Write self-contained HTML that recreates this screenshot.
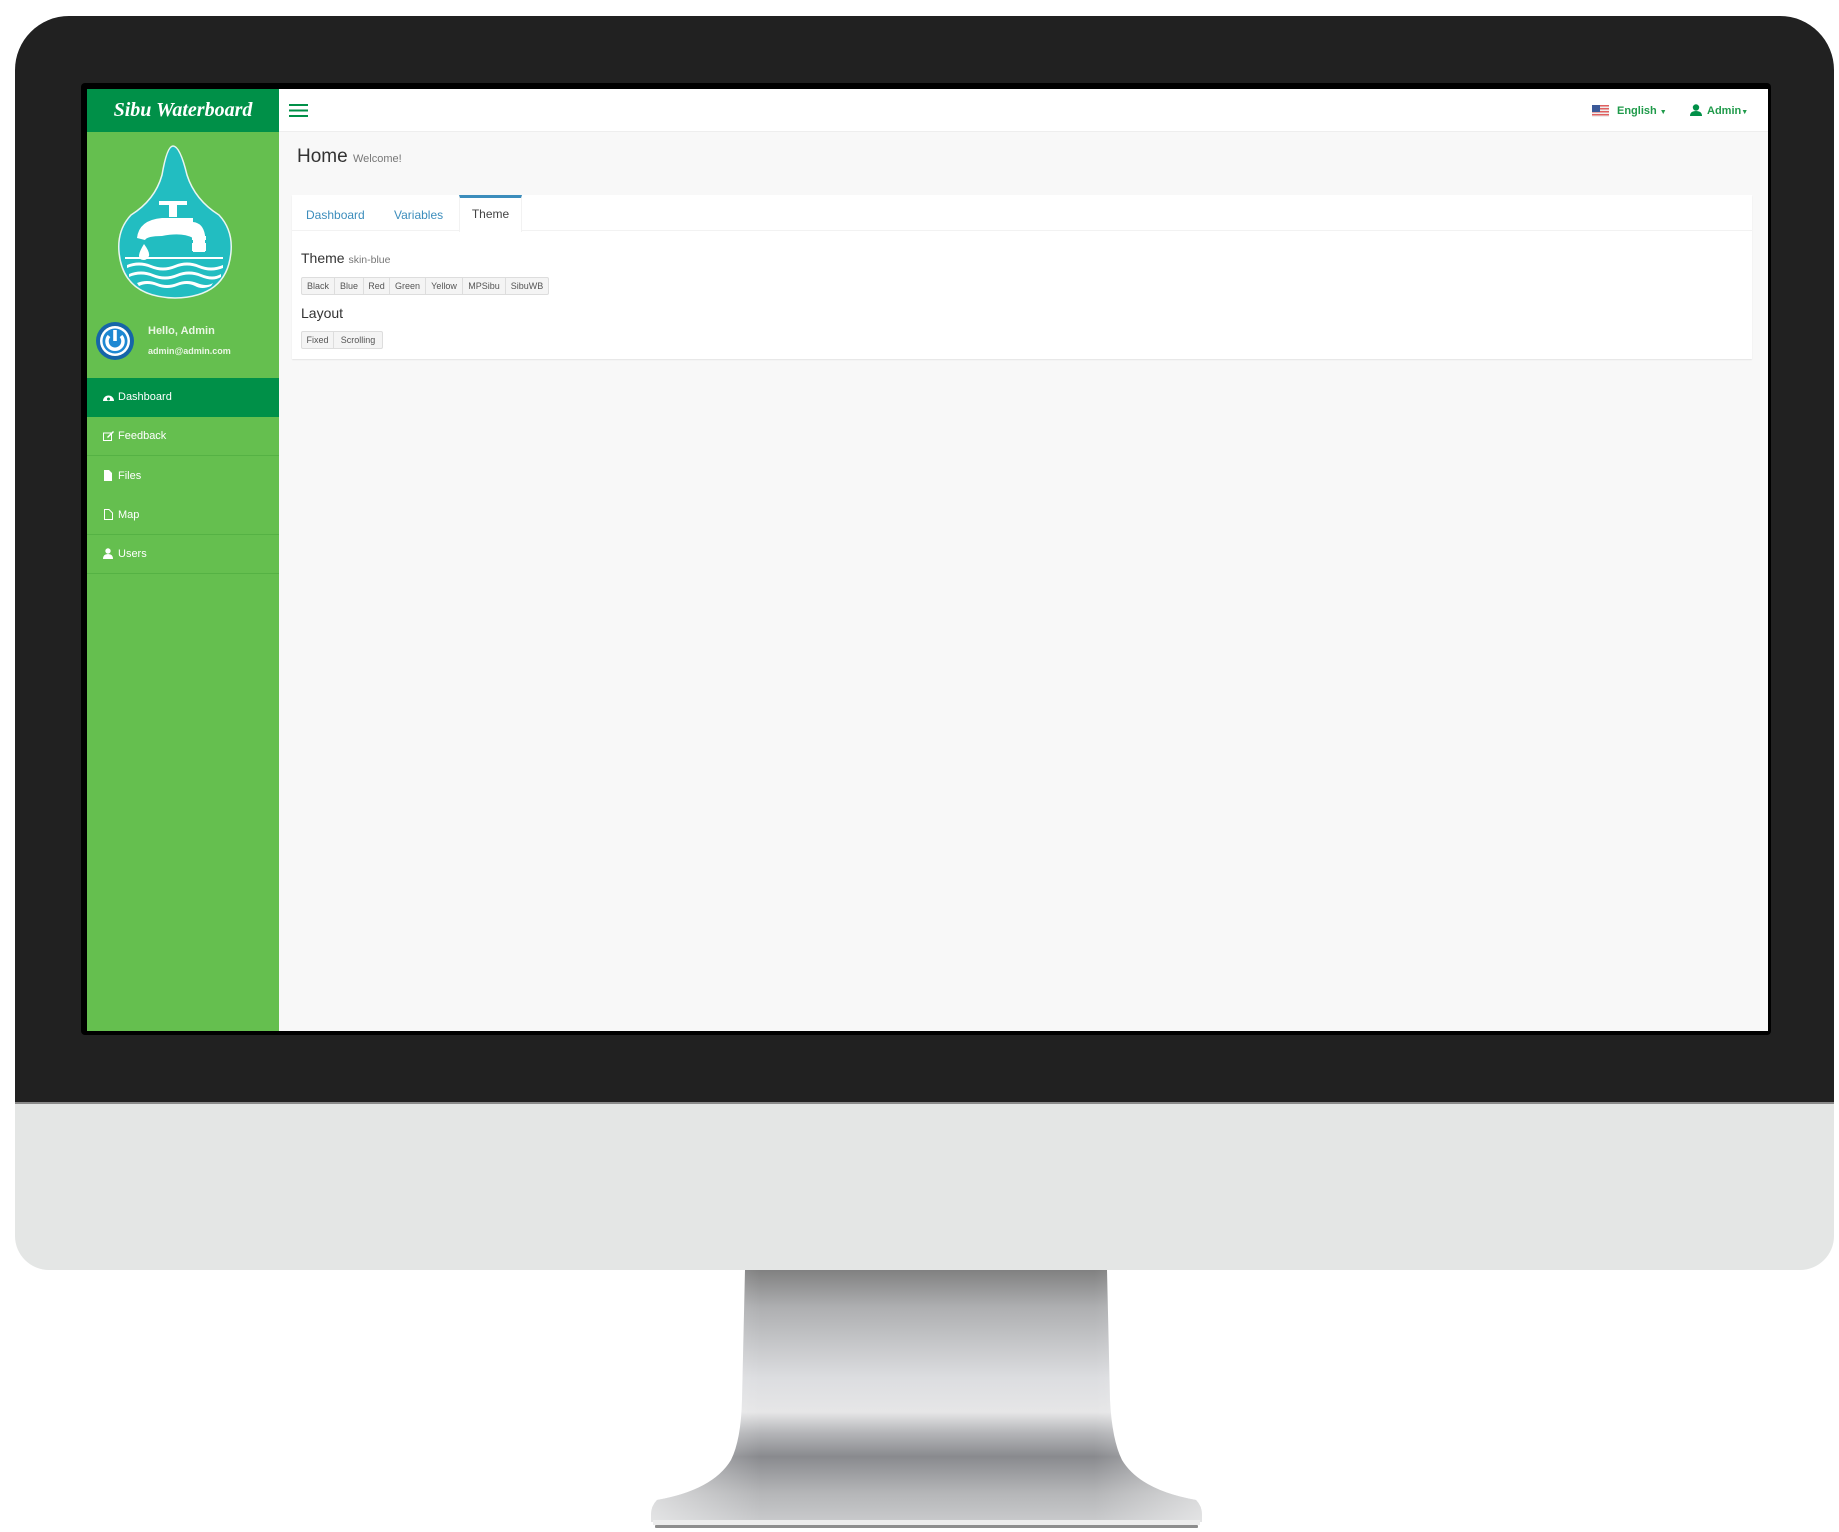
<!DOCTYPE html>
<html><head><meta charset="utf-8"><style>
*{margin:0;padding:0;box-sizing:border-box}
body{width:1839px;height:1532px;background:#fff;position:relative;overflow:hidden;font-family:"Liberation Sans",sans-serif}
.bezel{position:absolute;left:15px;top:16px;width:1819px;height:1254px;background:#e4e6e5;border-radius:54px 54px 34px 34px;overflow:hidden}
.bezel .dark{position:absolute;left:0;top:0;width:100%;height:1086px;background:#212121}
.bezel .line{position:absolute;left:0;top:1086px;width:100%;height:2px;background:#8a8a8a}
.scr{position:absolute;left:81px;top:83px;width:1690px;height:952px;background:#000;border-radius:4px}
.content{position:absolute;left:87px;top:89px;width:1681px;height:942px;background:#f8f8f8;overflow:hidden}
.side{position:absolute;left:0;top:0;width:192px;height:100%;background:#65bf4f}
.logo{position:absolute;left:0;top:0;width:192px;height:43px;background:#009048;color:#fff;font-family:"Liberation Serif",serif;font-style:italic;font-weight:bold;font-size:20px;text-align:center;line-height:43px}
.hdr{position:absolute;left:192px;top:0;right:0;height:43px;background:#fff;border-bottom:1px solid #eee}
.menu div{position:absolute;left:0;width:192px;height:39px;color:#fff;font-size:11px;line-height:39px;padding-left:16px}
.menu svg{vertical-align:-2px;margin-right:4px}
.box{position:absolute;left:205px;top:106px;width:1460px;height:164px;background:#fff;box-shadow:0 1px 1px rgba(0,0,0,.08)}
.tabs{position:absolute;left:0;top:0;width:100%;height:36px;border-bottom:1px solid #f2f2f2}
.tab{position:absolute;top:0;height:36px;font-size:12px;line-height:40px;color:#3c8dbc}
.btns{position:absolute;display:flex;border:1px solid #ddd;border-radius:2px;background:#f4f4f4}
.btns span{font-size:9px;color:#555;height:16px;line-height:16px;text-align:center;border-right:1px solid #ddd}
.btns span:last-child{border-right:none}
</style></head><body>
<div class="bezel"><div class="dark"></div><div class="line"></div></div>
<svg style="position:absolute;left:640px;top:1268px" width="570" height="264" viewBox="640 1268 570 264">
<defs><linearGradient id="g" x1="0" y1="1268" x2="0" y2="1530" gradientUnits="userSpaceOnUse">
<stop offset="0" stop-color="#7e7e7e"/><stop offset=".15" stop-color="#aeafb1"/><stop offset=".42" stop-color="#dcdde0"/><stop offset=".55" stop-color="#e6e6e7"/><stop offset=".63" stop-color="#b4b5b8"/><stop offset=".72" stop-color="#898a8e"/><stop offset=".86" stop-color="#b5b6b8"/><stop offset="1" stop-color="#cfd0d2"/></linearGradient>
<linearGradient id="h" x1="650" y1="0" x2="1205" y2="0" gradientUnits="userSpaceOnUse"><stop offset="0" stop-color="#fff" stop-opacity=".5"/><stop offset=".2" stop-color="#fff" stop-opacity="0"/><stop offset=".8" stop-color="#fff" stop-opacity="0"/><stop offset="1" stop-color="#fff" stop-opacity=".5"/></linearGradient></defs>
<path d="M745 1270 L1107 1270 L1110 1400 Q1112 1440 1122 1460 Q1140 1490 1196 1500 Q1202 1506 1202 1515 L1202 1522 L651 1522 L651 1515 Q651 1506 657 1500 Q713 1490 731 1460 Q741 1440 742 1400 Z" fill="url(#g)"/>
<path d="M745 1270 L1107 1270 L1110 1400 Q1112 1440 1122 1460 Q1140 1490 1196 1500 Q1202 1506 1202 1515 L1202 1522 L651 1522 L651 1515 Q651 1506 657 1500 Q713 1490 731 1460 Q741 1440 742 1400 Z" fill="url(#h)"/>
<rect x="653" y="1520" width="547" height="5" fill="#ececec"/><rect x="655" y="1525" width="543" height="3" rx="1" fill="#8d8d8d"/>
</svg>
<div class="scr"></div>
<div class="content">
<div class="side">
<div class="logo">Sibu Waterboard</div>
<svg style="position:absolute;left:30px;top:55px" width="120" height="160" viewBox="120 144 120 160">
<path d="M176 146 Q183 146 190 175 Q198 200 222 215 Q236 230 234 252 Q230 297 178 298 Q126 297 122 252 Q120 230 134 215 Q158 200 165 175 Q170 146 176 146Z" fill="#22bdc1" stroke="#e9f6f1" stroke-width="1.5"/>
<g fill="#fff"><rect x="162" y="201" width="28" height="4"/><rect x="172" y="205" width="8" height="12"/><path d="M140 238 Q142 220 165 218 L196 218 L196 222 Q206 223 208 235 L208 252 L196 252 L196 238 Q185 232 165 236 Q150 236 148 240 Z"/><rect x="195" y="236" width="14" height="4"/><rect x="195" y="243" width="14" height="8"/><path d="M147 244 Q153 252 152 256 Q150 260 147 260 Q142 260 142 256 Q142 252 147 244Z"/><rect x="128" y="257" width="98" height="2"/>
<path d="M130 265 Q142 260 154 265 Q166 270 178 265 Q190 260 202 265 Q214 270 226 265 L226 268 Q214 273 202 268 Q190 263 178 268 Q166 273 154 268 Q142 263 130 268Z"/><path d="M132 274 Q144 269 156 274 Q168 279 180 274 Q192 269 204 274 Q216 279 224 274 L224 277 Q216 282 204 277 Q192 272 180 277 Q168 282 156 277 Q144 272 132 277Z"/><path d="M140 283 Q150 279 160 283 Q170 287 180 283 Q190 279 200 283 Q210 287 216 283 L214 286 Q205 290 198 286 Q190 282 180 286 Q170 290 160 286 Q150 282 142 286Z"/></g></svg>
<svg style="position:absolute;left:8px;top:232px" width="40" height="40"><circle cx="20" cy="20" r="19" fill="#1565a8"/><circle cx="20" cy="20" r="15" fill="#fff"/><circle cx="20" cy="20" r="12.5" fill="#1e88d2"/><path d="M14 15 A8 8 0 1 0 26 15" stroke="#fff" stroke-width="3.5" fill="none"/><rect x="18.2" y="9" width="3.6" height="11" fill="#fff"/></svg>
<div style="position:absolute;left:61px;top:236px;color:#eaf6e4;font-size:11px;font-weight:bold">Hello, Admin</div>
<div style="position:absolute;left:61px;top:257px;color:#eaf6e4;font-size:9px;font-weight:bold">admin@admin.com</div>
<div class="menu">
<div style="top:289px;background:#009048"><svg width="11" height="10"><path d="M0 9 A5.5 5.5 0 0 1 11 9Z" fill="#fff"/><circle cx="5.5" cy="7" r="1.5" fill="#009048"/></svg>Dashboard</div>
<div style="top:328px;border-bottom:1px solid #55b244"><svg width="11" height="10"><rect x=".5" y="2" width="8" height="7.5" fill="none" stroke="#fff"/><path d="M4 6 L10 0 L11 1 L5 7Z" fill="#fff"/></svg>Feedback</div>
<div style="top:368px"><svg width="11" height="11"><path d="M1 0 H6 L9 3 V11 H1Z" fill="#fff"/></svg>Files</div>
<div style="top:407px;border-bottom:1px solid #55b244"><svg width="11" height="11"><path d="M1.5 .5 H6 L9.5 4 V10.5 H1.5Z" fill="none" stroke="#fff"/></svg>Map</div>
<div style="top:446px;border-bottom:1px solid #55b244"><svg width="11" height="11"><circle cx="5" cy="3" r="2.7" fill="#fff"/><path d="M0 11 Q0 6 5 6 Q10 6 10 11Z" fill="#fff"/></svg>Users</div>
</div>
</div>
<div class="hdr">
<svg style="position:absolute;left:10px;top:15px" width="19" height="13"><rect y="0" width="19" height="2" fill="#009048"/><rect y="5.5" width="19" height="2" fill="#009048"/><rect y="11" width="19" height="2" fill="#009048"/></svg>
<svg style="position:absolute;left:1313px;top:16px" width="17" height="12"><rect width="17" height="12" fill="#eee"/><g fill="#e06060"><rect y="0" width="17" height="1.5"/><rect y="3" width="17" height="1.5"/><rect y="6" width="17" height="1.5"/><rect y="9" width="17" height="1.5"/></g><rect width="8" height="7" fill="#3b5998"/></svg>
<div style="position:absolute;left:1338px;top:16px;font-size:11px;font-weight:bold;color:#1f9a4a">English <span style="font-size:7px">▼</span></div>
<svg style="position:absolute;left:1411px;top:15px" width="12" height="12"><circle cx="6" cy="3.5" r="3.2" fill="#009048"/><path d="M0 12 Q0 7 6 7 Q12 7 12 12Z" fill="#009048"/></svg>
<div style="position:absolute;left:1428px;top:16px;font-size:11px;font-weight:bold;color:#1f9a4a">Admin<span style="font-size:7px">▼</span></div>
</div>
<div style="position:absolute;left:210px;top:57px;font-size:19px;color:#333;line-height:22px"><span>Home</span> <span style="font-size:11px;color:#777">Welcome!</span></div>
<div class="box">
<div class="tabs">
<div class="tab" style="left:14px">Dashboard</div>
<div class="tab" style="left:102px">Variables</div>
<div class="tab" style="left:167px;width:63px;border-top:3px solid #3c8dbc;border-left:1px solid #f2f2f2;border-right:1px solid #f2f2f2;color:#444;text-align:center;line-height:33px;background:#fff;height:37px">Theme</div>
</div>
<div style="position:absolute;left:9px;top:55px;font-size:14px;color:#333">Theme <span style="font-size:10.5px;color:#777">skin-blue</span></div>
<div class="btns" style="left:9px;top:82px"><span style="width:33px">Black</span><span style="width:29px">Blue</span><span style="width:26px">Red</span><span style="width:36px">Green</span><span style="width:37px">Yellow</span><span style="width:43px">MPSibu</span><span style="width:42px">SibuWB</span></div>
<div style="position:absolute;left:9px;top:110px;font-size:14px;color:#333">Layout</div>
<div class="btns" style="left:9px;top:136px"><span style="width:32px">Fixed</span><span style="width:48px">Scrolling</span></div>
</div>
</div>
</body></html>
